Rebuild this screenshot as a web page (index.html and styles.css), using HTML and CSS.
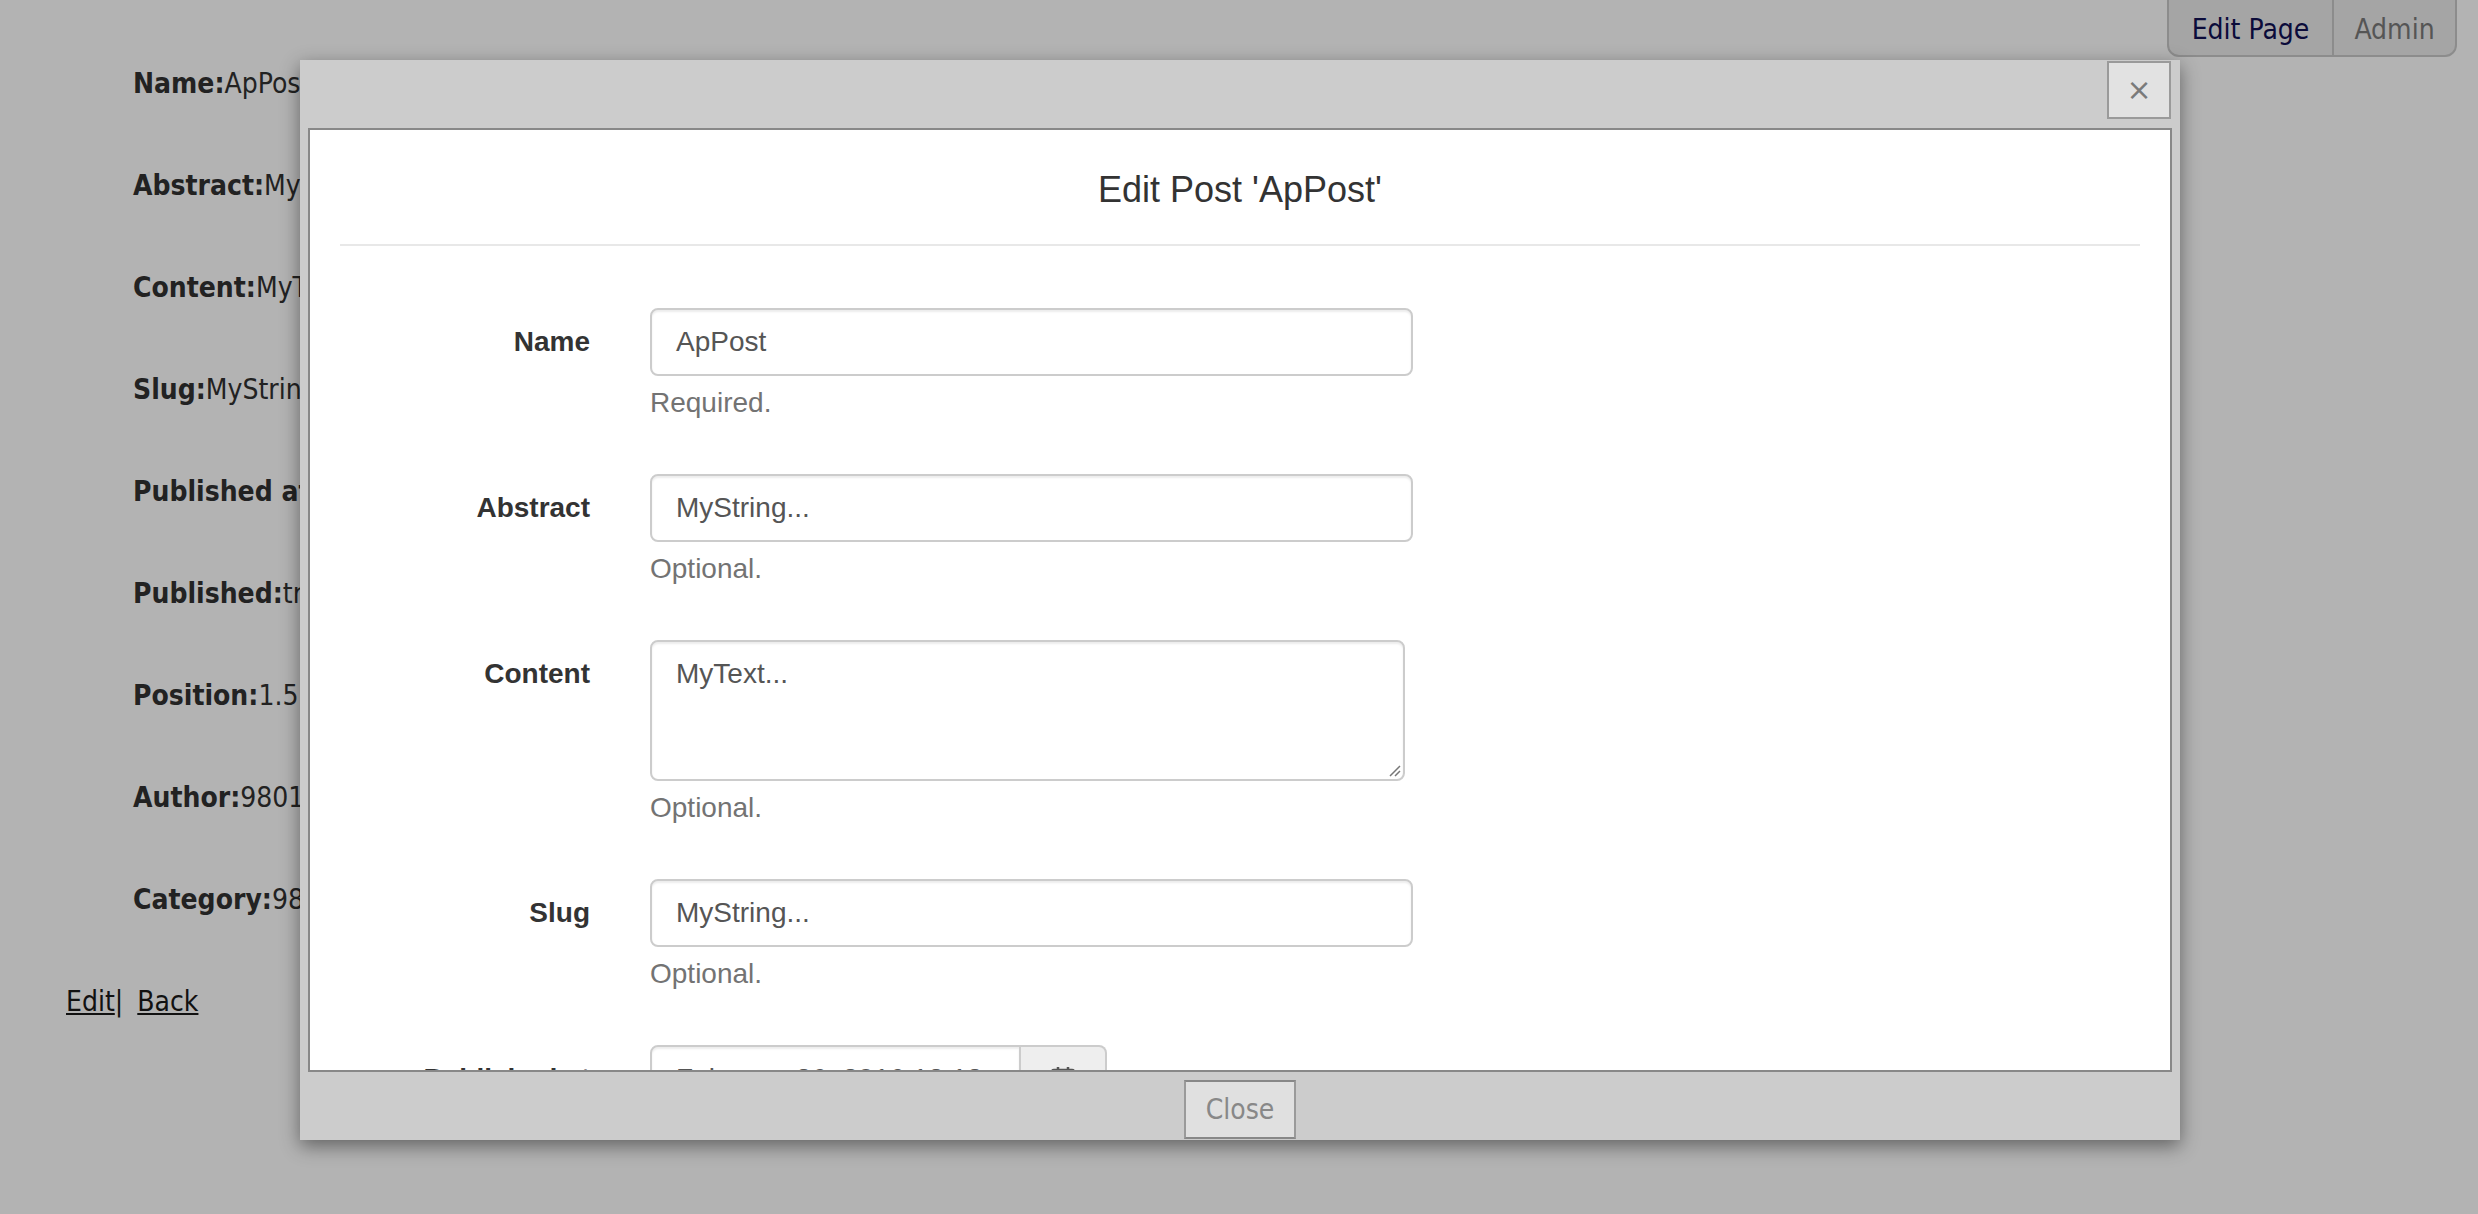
FILE: index.html
```html
<!DOCTYPE html>
<html lang="en">
<head>
<meta charset="utf-8">
<title>Post ApPost</title>
<link rel="stylesheet" href="styles.css">
</head>
<body>
<main class="page">
  <dl class="details">
    <div class="detail"><dt>Name:</dt><dd>ApPost</dd></div>
    <div class="detail"><dt>Abstract:</dt><dd>MyString...</dd></div>
    <div class="detail"><dt>Content:</dt><dd>MyText...</dd></div>
    <div class="detail"><dt>Slug:</dt><dd>MyString...</dd></div>
    <div class="detail"><dt>Published at:</dt><dd>2016-02-26 13:18:00 UTC</dd></div>
    <div class="detail"><dt>Published:</dt><dd>true</dd></div>
    <div class="detail"><dt>Position:</dt><dd>1.5</dd></div>
    <div class="detail"><dt>Author:</dt><dd>980190962</dd></div>
    <div class="detail"><dt>Category:</dt><dd>980190962</dd></div>
  </dl>
  <p class="actions"><a href="#">Edit</a>| <a class="back" href="#">Back</a></p>
</main>

<nav class="admin-tabs">
  <a class="tab tab-active" href="#">Edit Page</a>
  <a class="tab tab-admin" href="#">Admin</a>
</nav>

<div class="dialog">
  <div class="dialog-titlebar">
    <button class="dialog-x" type="button">×</button>
  </div>
  <div class="dialog-frame">
    <div class="frame-header">
      <h4 class="frame-title">Edit Post 'ApPost'</h4>
    </div>
    <div class="form">
      <div class="form-group">
        <label class="control-label">Name</label>
        <div class="field">
          <div class="form-control">ApPost</div>
          <p class="help">Required.</p>
        </div>
      </div>
      <div class="form-group">
        <label class="control-label">Abstract</label>
        <div class="field">
          <div class="form-control">MyString...</div>
          <p class="help">Optional.</p>
        </div>
      </div>
      <div class="form-group">
        <label class="control-label">Content</label>
        <div class="field">
          <div class="form-control textarea">MyText...
            <svg class="grip" width="14" height="14" viewBox="0 0 14 14"><path d="M13 3 L3 13 M13 8 L8 13" stroke="#777" stroke-width="1.5" fill="none"/></svg>
          </div>
          <p class="help">Optional.</p>
        </div>
      </div>
      <div class="form-group">
        <label class="control-label">Slug</label>
        <div class="field">
          <div class="form-control">MyString...</div>
          <p class="help">Optional.</p>
        </div>
      </div>
      <div class="form-group">
        <label class="control-label">Published at</label>
        <div class="field">
          <div class="input-group">
            <div class="form-control group-input">February 26, 2016 13:18</div>
            <span class="addon">
              <svg width="28" height="28" viewBox="0 0 28 28"><rect x="3" y="5" width="22" height="20" rx="2" fill="none" stroke="#555" stroke-width="2.5"/><path d="M9 2 V8 M19 2 V8 M3 11 H25" stroke="#555" stroke-width="2.5"/></svg>
            </span>
          </div>
        </div>
      </div>
    </div>
  </div>
  <div class="dialog-footer">
    <button class="dialog-close" type="button">Close</button>
  </div>
</div>
</body>
</html>
```

FILE: styles.css
```css
html, body {
  margin: 0;
  padding: 0;
}
body {
  background: #b3b3b3;
  width: 2478px;
  height: 1214px;
  overflow: hidden;
  font-family: "DejaVu Sans Condensed", "DejaVu Sans", sans-serif;
  font-size: 28px;
  color: #222;
}
.page {
  padding: 67px 0 0 66px;
}
.details {
  margin: 0;
  padding-left: 67px;
  display: flex;
  flex-direction: column;
  gap: 68px;
}
.detail {
  display: flex;
  line-height: 34px;
  height: 34px;
}
.detail dt {
  font-weight: bold;
}
.detail dd {
  margin: 0;
}
.actions {
  margin: 68px 0 0;
  line-height: 34px;
  color: #111;
}
.actions a {
  color: #111;
  text-decoration: underline;
}
.actions .back {
  margin-left: 6px;
}

/* admin toolbar */
.admin-tabs {
  position: absolute;
  top: -2px;
  right: 21px;
  width: 290px;
  height: 59px;
  display: flex;
  background: #a5a5a5;
  border: 2px solid #8c8c8c;
  border-radius: 0 0 12px 12px;
  box-sizing: border-box;
  overflow: hidden;
}
.tab {
  display: flex;
  align-items: center;
  justify-content: center;
  padding-top: 4px;
  text-decoration: none;
  color: #555;
  font-size: 28px;
  box-sizing: border-box;
}
.tab-active {
  color: #0b0b3a;
  border-right: 2px solid #8c8c8c;
  width: 165px;
}
.tab-admin {
  flex: 1;
}

/* dialog */
.dialog {
  position: absolute;
  left: 300px;
  top: 60px;
  width: 1880px;
  height: 1080px;
  background: #cccccc;
  box-shadow: 0 6px 18px rgba(0, 0, 0, 0.45);
  display: flex;
  flex-direction: column;
}
.dialog-titlebar {
  height: 68px;
  display: flex;
  justify-content: flex-end;
  align-items: flex-start;
  padding: 1px 9px 0 0;
  box-sizing: border-box;
}
.dialog-x {
  width: 64px;
  height: 58px;
  background: #e2e2e2;
  border: 2px solid #9a9a9a;
  color: #7a7a7a;
  font-family: "DejaVu Sans", sans-serif;
  font-size: 30px;
  padding: 0;
  line-height: 1;
}
.dialog-frame {
  flex: 1;
  margin: 0 8px;
  border: 2px solid #888;
  background: #fff;
  overflow: hidden;
  font-family: "Liberation Sans", Arial, sans-serif;
  color: #333;
}
.frame-header {
  margin: 0 30px;
  padding: 40px 0 34px;
  border-bottom: 2px solid #e8e8e8;
}
.frame-title {
  margin: 0;
  text-align: center;
  font-size: 36px;
  line-height: 40px;
  font-weight: 500;
  color: #333;
}
.form {
  padding-top: 62px;
}
.form-group {
  display: grid;
  grid-template-columns: 280px 763px;
  column-gap: 60px;
  margin-bottom: 32px;
}
.control-label {
  text-align: right;
  font-weight: bold;
  font-size: 28px;
  line-height: 40px;
  padding-top: 14px;
  color: #333;
}
.form-control {
  height: 68px;
  box-sizing: border-box;
  border: 2px solid #ccc;
  border-radius: 8px;
  padding: 0 24px;
  font-size: 28px;
  line-height: 64px;
  color: #555;
  box-shadow: inset 0 2px 2px rgba(0, 0, 0, 0.075);
  background: #fff;
}
.textarea {
  position: relative;
  width: 755px;
  height: 141px;
  line-height: 40px;
  padding-top: 12px;
}
.grip {
  position: absolute;
  right: 2px;
  bottom: 2px;
}
.help {
  margin: 8px 0 20px;
  font-size: 28px;
  line-height: 38px;
  color: #737373;
}
.input-group {
  display: flex;
  width: 457px;
}
.group-input {
  width: 371px;
  border-radius: 8px 0 0 8px;
  white-space: nowrap;
  overflow: hidden;
}
.addon {
  width: 86px;
  height: 68px;
  box-sizing: border-box;
  background: #eee;
  border: 2px solid #ccc;
  border-left: 0;
  border-radius: 0 8px 8px 0;
  display: flex;
  align-items: center;
  justify-content: center;
}
.dialog-footer {
  height: 68px;
  display: flex;
  justify-content: center;
  align-items: flex-start;
  padding-top: 8px;
  box-sizing: border-box;
}
.dialog-close {
  width: 112px;
  height: 59px;
  background: #e0e0e0;
  border: 2px solid #9a9a9a;
  border-top-color: #888;
  border-bottom-color: #888;
  color: #888;
  font-family: "DejaVu Sans Condensed", "DejaVu Sans", sans-serif;
  font-size: 28px;
  padding: 0;
}
```
